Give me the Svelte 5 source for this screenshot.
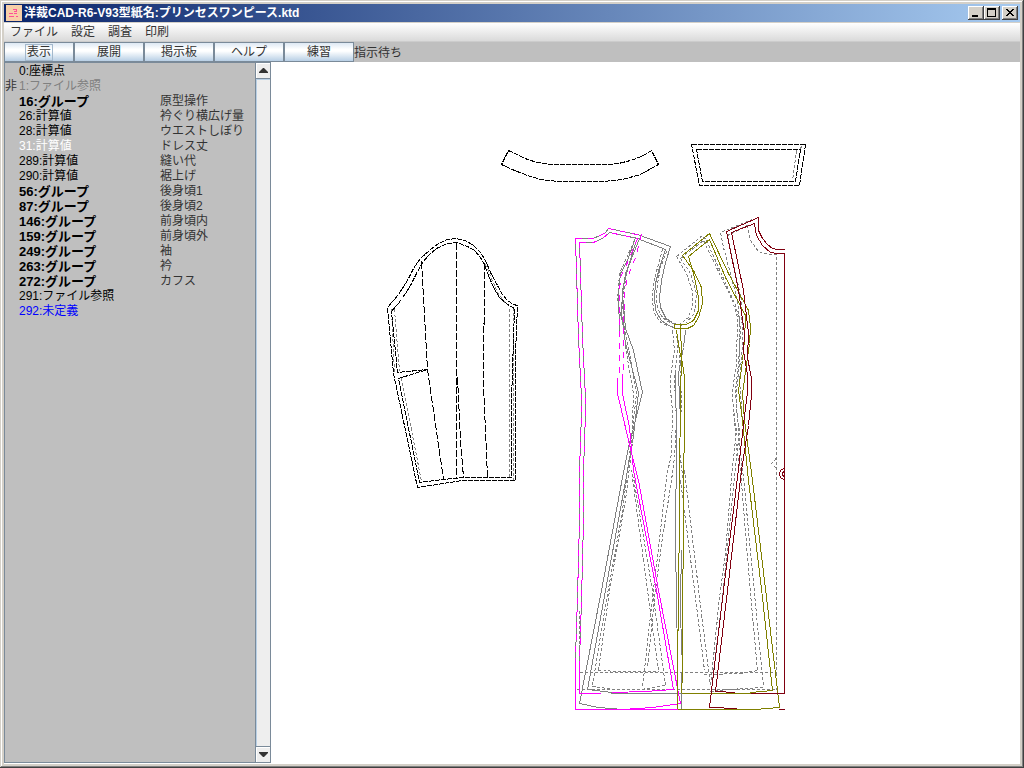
<script>
  const menus = ['ファイル', '設定', '調査', '印刷'];
  const tools = ['表示', '展開', '掲示板', 'ヘルプ', '練習'];

  const rows = [
    { id: 0, name: '座標点' },
    { id: 1, name: 'ファイル参照', flag: '非', kind: 'hidden' },
    { id: 16, name: 'グループ', note: '原型操作', kind: 'group' },
    { id: 26, name: '計算値', note: '衿ぐり横広げ量' },
    { id: 28, name: '計算値', note: 'ウエストしぼり' },
    { id: 31, name: '計算値', note: 'ドレス丈', kind: 'selected' },
    { id: 289, name: '計算値', note: '縫い代' },
    { id: 290, name: '計算値', note: '裾上げ' },
    { id: 56, name: 'グループ', note: '後身頃1', kind: 'group' },
    { id: 87, name: 'グループ', note: '後身頃2', kind: 'group' },
    { id: 146, name: 'グループ', note: '前身頃内', kind: 'group' },
    { id: 159, name: 'グループ', note: '前身頃外', kind: 'group' },
    { id: 249, name: 'グループ', note: '袖', kind: 'group' },
    { id: 263, name: 'グループ', note: '衿', kind: 'group' },
    { id: 272, name: 'グループ', note: 'カフス', kind: 'group' },
    { id: 291, name: 'ファイル参照' },
    { id: 292, name: '未定義', kind: 'undefined' },
  ];

  // Pattern pieces: each entry is a pen class and the polylines drawn with it.
  const pieces = [
    ['guide', [
      // sleeve
      '509,308 509,476', '513,307 513,480', '394,309 399,371', '401,378 421,481',
      '391,309 394,372', '485,264 497,292 505,303',
      // cuff
      '796,150 792,180', '801,146 799,150',
      // back centre
      '598,670 609,590 625,500 631,450 633,393 625,347 622,300 626,272 634,250',
      '592,685 605,605 622,510 629,455 636,393 628,347 617,300 619,273 634,240',
      '665,685 652,590 633,477', '658,670 647,590 631,470',
      '598,670 620,671 658,671', '592,686 615,689 640,689 665,685',
      '579,672 776,672', '576,689 777,689', '579,610 579,693', '776,672 776,689',
      // back side
      '662,249 657,267 653,283 652,297 653,311 659,321 668,326',
      '666,251 660,267 657,283 656,297 657,308 662,317 672,324',
      '672,330 674,350 670,376 670,390 672,410 671,453 666,477 657,557 652,597 642,687',
      '676,330 677,350 674,380 676,420 674,457 671,480 662,537 654,597 647,667',
      // front side
      '676,256 702,235 706,240', '680,258 703,240 732,300 737,317 736,363 732,390 733,413 736,430 731,477 725,553 719,597 710,687',
      '676,256 686,273 692,291 692,305 688,317 678,325 665,318',
      '680,258 690,273 696,293 694,313 685,323', '706,240 735,305 739,320 739,363 736,390 736,410 739,430 734,477 722,597 712,680',
      '734,413 735,440 740,470 750,593 757,670', '737,413 739,445 743,477 754,593 763,687',
      '680,480 695,597 704,670', '684,470 699,597 710,685', '678,340 681,400 679,450 684,490',
      '704,674 740,673 757,670', '710,691 728,689 763,687',
      // front centre
      '752,219 720,232 723,247 737,300 740,330 738,363 735,390 737,420',
      '747,225 727,235 741,300 742,345 739,380 742,420',
      '747,225 750,240 758,251 768,254 776,254 776,672',
      '775,458 774,461 771,463 775,467 777,468'
    ]],
    ['gray', [
      '575,238 578,337 580,377 581,397 581,413 579,470 579,520 577,597 575,657 575,709',
      '579,242 582,337 584,377 585,397 585,413 583,470 583,520 581,600 579,660 579,693',
      '575,238 592,238 600,235 605,232 608,228 641,235', '579,242 593,242 602,238 609,232 637,238',
      '635,237 627,260 620,273 618,293 619,333',
      '579,703 601,590 622,477 628,447 642,392 633,350 625,328 622,293 625,273 633,253 639,238',
      '587,689 605,590 627,470 632,443 638,392 625,343 621,313 622,290 628,265 636,240',
      '587,689 612,692', '579,703 598,707 622,709',
      '637,234 670,246 665,262 661,280 659,297 660,307 665,317 672,323 682,325',
      '637,238 665,249 659,267 655,283 654,297 655,310 661,320 668,325 676,328',
      '685,330 683,347 678,373 680,420', '675,373 676,440 675,542 676,600 677,655',
      '681,550 680,600 681,655', '610,693 681,693', '681,672 681,709', '579,709 681,709'
    ]],
    ['magenta', [
      '575,657 575,709 680,709', '579,660 579,693 600,693',
      '617,377 617,393 625,427 632,457 638,480 658,590 680,703 652,707 622,709',
      '622,373 622,393 629,427 633,470 656,590 673,689 645,691 612,692'
    ]],
    ['magenta mixed', [
      '575,238 578,337 580,377 581,397 581,413 579,470 579,520 577,597 575,657',
      '579,242 582,337 584,377 585,397 585,413 583,470 583,520 581,600 579,660',
      '575,238 592,238 600,235 605,232 608,228 641,235', '579,242 593,242 602,238 609,232 637,238',
      '641,234 635,257 627,277 624,293 623,333 623,373',
      '637,238 627,262 620,277 619,293 619,373'
    ]],
    ['olive', [
      '709,233 682,255 693,270 701,287 702,303 698,317 693,325 687,328 674,328 674,324 686,324 693,320 698,310 698,297 694,277 688,256 709,239',
      '709,233 728,273 748,310 750,327 749,343 747,357 742,393 744,420 752,480 766,597 777,690 779,707 755,709',
      '709,239 725,277 745,315 744,340 742,360 738,390 742,420 748,480 762,597 772,690 750,692',
      '676,330 679,350 682,363 684,377 684,443 683,463 683,542 682,597 682,672 681,693',
      '680,325 681,355 680,397 679,480 679,550 678,555 677,709',
      '681,693 784,693', '677,709 737,709 755,709'
    ]],
    ['red', [
      '709,707 723,590 737,477 744,415 747,392 747,375 743,350 744,333 738,290 726,231 758,217 758,230 762,238 767,244 772,248 777,249 784,249',
      '715,691 727,590 741,470 748,425 751,395 751,378 747,357 748,333 743,290 731,232 754,223 756,235 762,245 770,252 777,253 784,253 784,693 750,693',
      '715,691 735,692', '709,707 737,708', '778,709 784,709',
      '784,468 781,469 779,472 779,475 781,478 784,479', '784,471 782,472 782,475 784,476'
    ]],
    ['black broken', [
      // sleeve
      '387,307 398,294 407,280 413,268 420,258 430,249 438,243 447,239 456,238 467,241 474,246 480,252 485,260 490,272 497,285 502,294 507,300 513,304 517,305 515,353 515,480 462,480 417,487 393,373 387,307',
      '391,311 401,299 410,285 416,273 422,262 429,254 436,248 447,243 456,242 467,246 474,250 480,257 484,264 488,275 493,287 499,297 507,304 514,308 511,400 511,477 462,477 443,479 419,482 398,378 427,369 397,372 391,311',
      // collar
      '508,150 527,159 537,162 550,164 607,164 618,163 630,160 641,156 651,150 658,164 640,174 622,179 603,181 558,181 540,179 527,175 514,170 501,164 508,150',
      // cuff
      '691,144 805,144 799,185 699,185 691,144', '696,149 800,149 795,181 702,181 696,149'
    ]],
    ['black dashes', [
      '421,261 424,315 427,369 443,479', '456,242 456,477', '457,377 460,440 463,477',
      '484,263 483,387 485,430 487,477'
    ]]
  ];
</script>

<div class="window">
  <header class="title">
    <svg class="logo" width="16" height="16" viewBox="0 0 16 16" aria-hidden="true">
      <rect width="16" height="16" fill="#f7cfa8" />
      <path d="M7 4h3v2H8M3 8h4M8 8h3M3 11h5M10 11h2" fill="none" stroke="#ff4f98" />
    </svg>
    <h1>洋裁CAD-R6-V93型紙名:プリンセスワンピース.ktd</h1>
    <div class="controls">
      <button aria-label="最小化"><svg width="12" height="10" viewBox="0 0 12 10"><path d="M2 7h6v2H2z" /></svg></button>
      <button aria-label="最大化"><svg width="12" height="10" viewBox="0 0 12 10"><path d="M1 0h9v9H1zM2 2v6h7V2z" fill-rule="evenodd" /></svg></button>
      <button class="close" aria-label="閉じる"><svg width="12" height="10" viewBox="0 0 12 10"><path d="M2 1h2v1h1v1h2V2h1V1h2v1H9v1H8v1H7v1h1v1h1v1h1v1H8V7H7V6H5v1H4v1H2V7h1V6h1V5h1V4H4V3H3V2H2z" /></svg></button>
    </div>
  </header>

  <nav class="menu">
    {#each menus as m}<button>{m}</button>{/each}
  </nav>

  <div class="toolbar">
    {#each tools as t, i}<button class:focus={i === 0}><span>{t}</span></button>{/each}
    <output>指示待ち</output>
  </div>

  <main>
    <aside>
      <div class="list">
        <table>
          <tbody>
            {#each rows as r}
              <tr class={r.kind}>
                <td class="flag">{r.flag ?? ''}</td>
                <td class="name">{r.id}:{r.name}</td>
                <td class="note">{r.note ?? ''}</td>
              </tr>
            {/each}
          </tbody>
        </table>
      </div>
      <div class="scroll">
        <button aria-label="上へ"><svg width="9" height="5" viewBox="0 0 9 5"><path d="M4 0h1l4 4v1H0V4z" /></svg></button>
        <div class="thumb"></div>
        <button aria-label="下へ"><svg width="9" height="5" viewBox="0 0 9 5"><path d="M4 5h1l4-4V0H0v1z" /></svg></button>
      </div>
    </aside>

    <section class="canvas">
      <svg class="drawing" width="100%" height="100%">
        <g transform="translate(-270.5 -61.5)">
          {#each pieces as [pen, lines]}
            <g class={pen}>
              {#each lines as points}<polyline {points} />{/each}
            </g>
          {/each}
        </g>
      </svg>
    </section>
  </main>
</div>

<style>
  :global(body) {
    margin: 0;
  }
  .window {
    box-sizing: border-box;
    display: flex;
    flex-direction: column;
    height: 100vh;
    padding: 4px;
    background: #d4d0c8;
    box-shadow:
      inset -1px -1px #404040,
      inset 1px 1px #d4d0c8,
      inset -2px -2px #808080,
      inset 2px 2px #fff;
    font: 12px/15px "Liberation Sans", "Noto Sans CJK JP", sans-serif;
    color: #333;
  }
  button {
    margin: 0;
    padding: 0;
    border: 0;
    background: none;
    font: inherit;
    color: inherit;
  }
  .title {
    display: flex;
    align-items: center;
    gap: 2px;
    height: 18px;
    padding: 0 2px;
    background: linear-gradient(90deg, #0a246a, #a6caf0);
  }
  .logo {
    flex: none;
    shape-rendering: crispEdges;
  }
  h1 {
    flex: 1;
    margin: 0;
    font-size: 12px;
    line-height: 18px;
    font-weight: 700;
    color: #fff;
    white-space: nowrap;
  }
  .controls {
    display: flex;
  }
  .controls button {
    display: flex;
    align-items: center;
    justify-content: center;
    box-sizing: border-box;
    width: 16px;
    height: 14px;
    background: #d4d0c8;
    box-shadow:
      inset -1px -1px #404040,
      inset 1px 1px #fff,
      inset -2px -2px #808080;
  }
  .controls .close {
    margin-left: 2px;
  }
  .menu {
    display: flex;
    gap: 13px;
    box-sizing: border-box;
    height: 20px;
    padding: 0 6px;
    border-top: 1px solid #d4d0c8;
    border-bottom: 1px solid #ccc;
    background: linear-gradient(#fff, #dadada);
  }
  .toolbar {
    display: flex;
    height: 20px;
    background: #bfbfbf;
  }
  .toolbar button {
    display: flex;
    align-items: center;
    justify-content: center;
    box-sizing: border-box;
    width: 70px;
    padding-top: 1px;
    border: 1px solid #7a8a99;
    background: linear-gradient(#dde8f3, #fff 35%, #fff 45%, #b8cfe5);
  }
  .toolbar span {
    padding: 0 1px;
  }
  .toolbar .focus span {
    outline: 1px solid #a3b8cc;
  }
  .toolbar output {
    line-height: 22px;
  }
  main {
    display: flex;
    flex: 1;
    min-height: 0;
    background: #fff;
  }
  aside {
    display: flex;
    box-sizing: border-box;
    width: 267px;
    margin-bottom: 1px;
    border: 1px solid #7a8a99;
    background: #bfbfbf;
  }
  .list {
    flex: 1;
    padding-top: 1px;
  }
  table {
    width: 100%;
    table-layout: fixed;
    border-collapse: collapse;
  }
  td {
    height: 15px;
    padding: 0;
    white-space: nowrap;
  }
  .flag {
    width: 14px;
    color: #333;
  }
  .name {
    width: 141px;
    color: #000;
  }
  .group .name {
    font-size: 13px;
    font-weight: 700;
  }
  .hidden .name {
    color: #808080;
  }
  .selected .name {
    color: #fff;
  }
  .undefined .name {
    color: #00f;
  }
  .scroll {
    display: flex;
    flex-direction: column;
    box-sizing: border-box;
    width: 15px;
    border-left: 1px solid #7a8a99;
    background: #eee;
  }
  .scroll button {
    display: flex;
    align-items: center;
    justify-content: center;
    height: 15px;
    fill: #333;
    box-shadow: inset 1px 1px #fff;
  }
  .thumb {
    flex: 1;
    border-top: 1px solid #7a8a99;
    border-bottom: 1px solid #7a8a99;
    box-shadow: inset 1px 1px #b8cfe5;
  }
  .canvas {
    flex: 1;
    min-width: 0;
  }
  .drawing {
    display: block;
    shape-rendering: crispEdges;
  }
  polyline {
    fill: none;
    stroke-width: 1px;
  }
  .guide {
    stroke: #808080;
    stroke-dasharray: 3 2;
  }
  .gray {
    stroke: #808080;
  }
  .magenta {
    stroke: #f0f;
  }
  .olive {
    stroke: #808000;
  }
  .red {
    stroke: #800010;
  }
  .black {
    stroke: #000;
  }
  .mixed {
    stroke-dasharray: 6 6;
  }
  .dashes {
    stroke-dasharray: 7 2;
  }
  .broken {
    stroke-dasharray: 5 1;
  }
</style>
